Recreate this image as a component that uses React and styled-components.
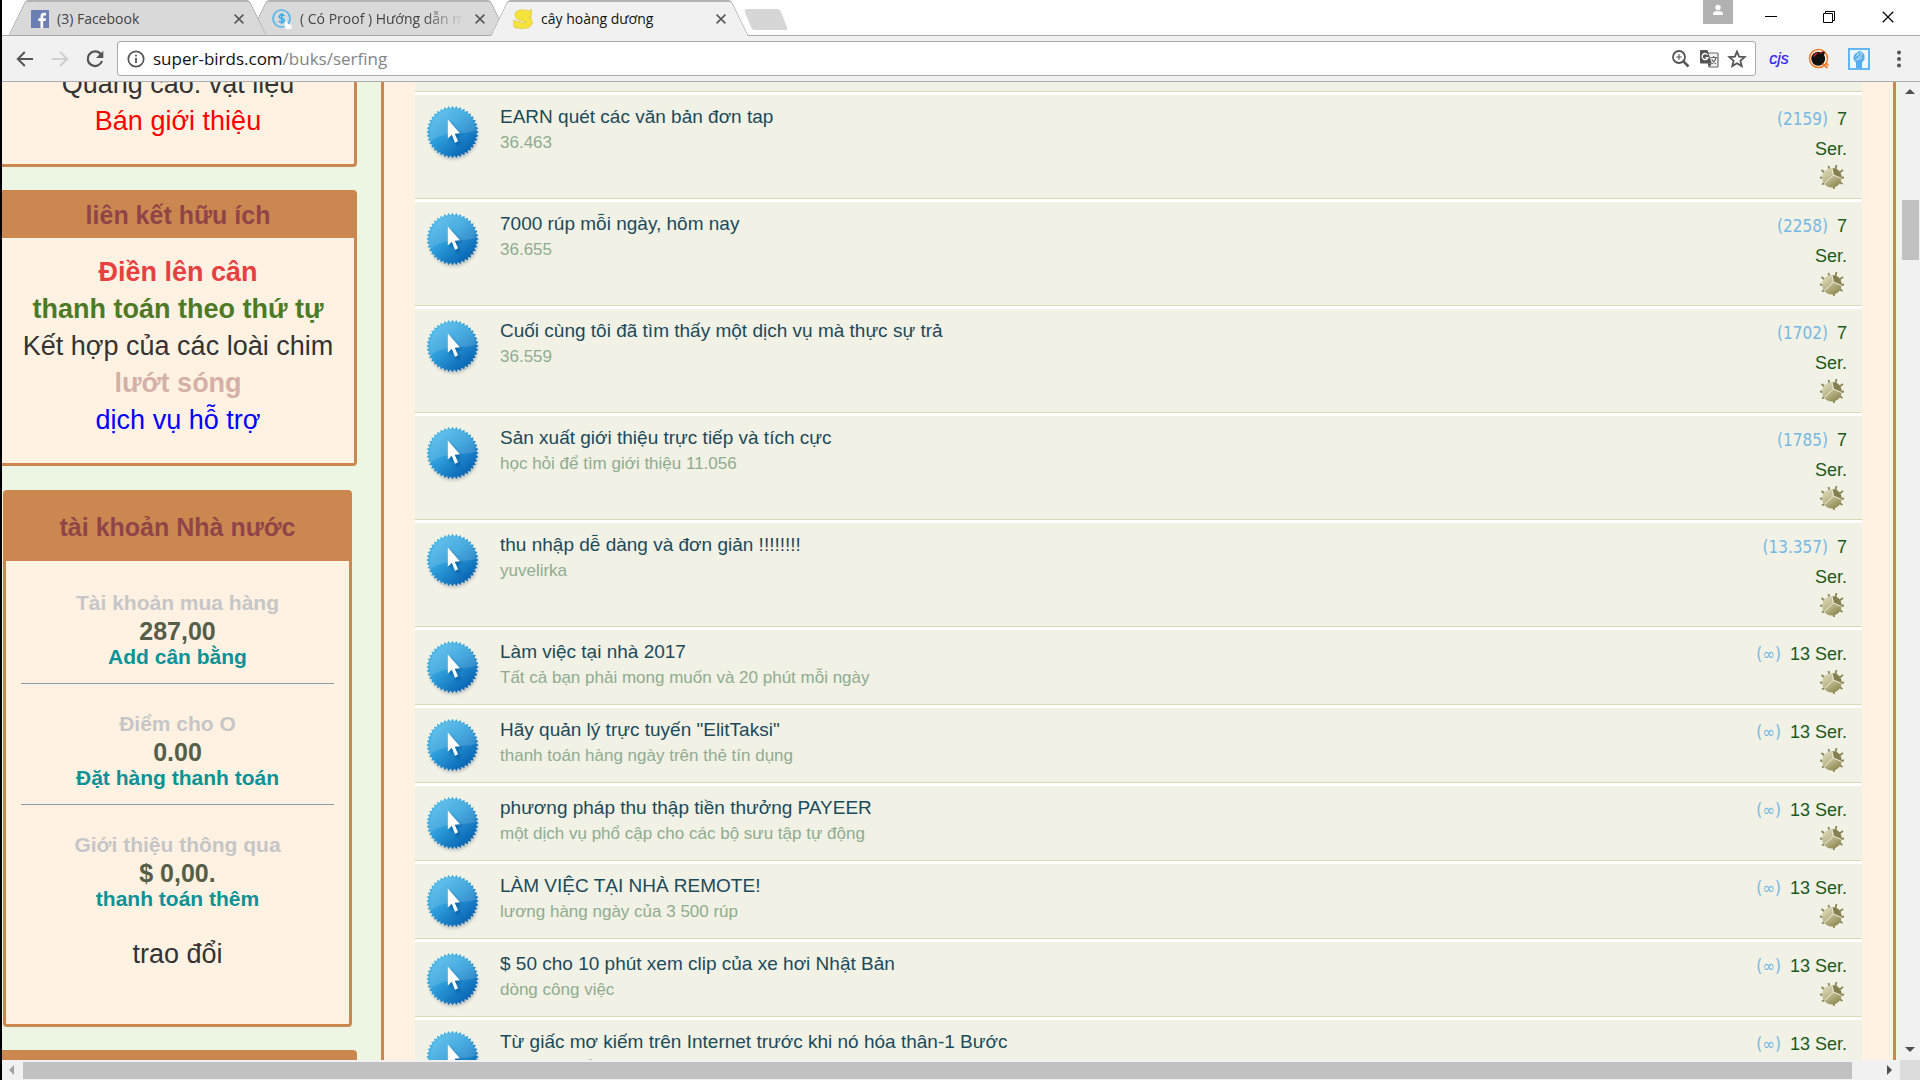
import React from "react";
import styled, { createGlobalStyle, css } from "styled-components";

const GlobalStyle = createGlobalStyle`
  * {
    box-sizing: border-box;
  }
  html, body, #root {
    height: 100%;
  }
  body {
    margin: 0;
    overflow: hidden;
    font-family: "Liberation Sans", Arial, sans-serif;
  }
  button {
    border: 0;
    padding: 0;
    background: none;
    font: inherit;
  }
  a {
    color: inherit;
    text-decoration: none;
  }
`;

const Window = styled.div`
  display: flex;
  flex-direction: column;
  height: 100vh;
  border-left: 2px solid #000;
  background: #fff;
`;

/* ---------- tabs ---------- */

const TabStrip = styled.header`
  display: flex;
  height: 36px;
  padding-left: 15px;
  border-bottom: 1px solid #a9a9a9;
  background: #fff;
`;

const Tab = styled.div`
  position: relative;
  z-index: ${props => (props.$active ? 3 : props.$level)};
  display: flex;
  align-items: center;
  width: 241px;
  height: ${props => (props.$active ? 36 : 35)}px;
  padding: 2px 11px 0 14px;
  font-family: "Open Sans", "Noto Sans", sans-serif;
  font-size: 14px;
  color: ${props => (props.$active ? "#111" : "#444")};

  &::before,
  &::after {
    content: "";
    position: absolute;
    z-index: -1;
    top: 0;
    bottom: 0;
    background: ${props => (props.$active ? "#f1f1f1" : "#d9d9d9")};
    border-top: 2px solid #b3b3b3;
  }
  &::before {
    left: 0;
    right: 24px;
    border-left: 1px solid #a0a0a0;
    border-top-left-radius: 3px;
    transform: skewX(-26deg);
  }
  &::after {
    left: 24px;
    right: 0;
    border-right: 1px solid #a0a0a0;
    border-top-right-radius: 3px;
    transform: skewX(26deg);
  }
`;

const TabTitle = styled.span`
  flex: 1;
  margin-left: 8px;
  overflow: hidden;
  white-space: nowrap;
  line-height: 24px;
  ${props =>
    props.$fade &&
    css`
      -webkit-mask-image: linear-gradient(to right, #000 75%, transparent);
      mask-image: linear-gradient(to right, #000 75%, transparent);
    `}
`;

const CloseTab = styled.button`
  display: flex;
  align-items: center;
  justify-content: center;
  width: 16px;
  height: 16px;
  margin-left: 8px;
`;

const NewTab = styled.button`
  width: 36px;
  height: 21px;
  margin: 9px 0 0 8px;
  border-radius: 3px;
  background: #d6d6d6;
  transform: skewX(22deg);
`;

const WindowControls = styled.div`
  display: flex;
  align-items: flex-start;
  margin-left: auto;
`;

const ProfileButton = styled.button`
  display: flex;
  justify-content: center;
  width: 30px;
  height: 24px;
  padding-top: 4px;
  margin-right: 9px;
  background: #b1b1b1;
`;

const ControlButton = styled.button`
  display: flex;
  align-items: center;
  justify-content: center;
  width: 58px;
  height: 34px;
  &:last-child {
    width: 62px;
    padding-right: 2px;
  }
`;

/* ---------- toolbar ---------- */

const Toolbar = styled.nav`
  display: flex;
  flex-shrink: 0;
  align-items: center;
  height: 46px;
  padding: 0 10px 0 13px;
  border-bottom: 1px solid #adadad;
  background: #f1f1f1;
`;

const NavButton = styled.button`
  display: flex;
  align-items: center;
  justify-content: center;
  width: 20px;
  height: 20px;
  margin-right: 15px;
  &:nth-of-type(3) {
    margin-right: 12px;
  }
`;

const Omnibox = styled.form`
  display: flex;
  flex: 1;
  align-items: center;
  height: 35px;
  padding: 0 8px 0 9px;
  border: 1px solid #a9a9a9;
  border-radius: 3px;
  background: #fff;
`;

const Address = styled.a`
  flex: 1;
  margin-left: 8px;
  font-family: "Open Sans", "Noto Sans", sans-serif;
  font-size: 17px;
  line-height: 28px;
  color: #111;
`;

const AddressPath = styled.span`
  color: #858585;
`;

const OmniButton = styled.button`
  display: flex;
  width: 20px;
  height: 20px;
  margin-left: 8px;
`;

const Extensions = styled.div`
  display: flex;
  align-items: center;
  gap: 18px;
  margin-left: 12px;
`;

const ExtButton = styled.button`
  display: flex;
  align-items: center;
  justify-content: center;
  width: 22px;
  height: 24px;
`;

const CjsLabel = styled.span`
  font-size: 16px;
  font-style: italic;
  line-height: 20px;
  color: #2c22f0;
  -webkit-text-stroke: 0.2px #2c22f0;
`;

/* ---------- page ---------- */

const Viewport = styled.div`
  display: grid;
  flex: 1;
  min-height: 0;
  grid-template-columns: 1fr 20px;
  grid-template-rows: minmax(0, 1fr) 20px;
`;

const Page = styled.div`
  display: flex;
  align-items: flex-start;
  overflow: hidden;
  background: #edf6e3;
`;

const Sidebar = styled.aside`
  display: flex;
  flex-direction: column;
  flex-shrink: 0;
  gap: 23px;
  width: 355px;
  margin-top: -16px;
  text-align: center;
`;

const Card = styled.section`
  border: 3px solid #ca8850;
  border-left-width: 0;
  border-radius: 0 4px 4px 0;
  background: #fff2e2;
  ${props =>
    props.$open &&
    css`
      border-top: 0;
    `}
  ${props =>
    props.$account &&
    css`
      margin: 1px 5px 0 1px;
      border-left-width: 3px;
      border-radius: 4px;
    `}
`;

const CardTitle = styled.h2`
  margin: 0;
  padding: ${props => (props.$tall ? "18px 0" : "6px 0 7px")};
  background: #ca8850;
  color: #914448;
  font-size: 25px;
  line-height: 32px;
`;

const LinkList = styled.div`
  display: flex;
  flex-direction: column;
  padding: ${props => (props.$open ? 0 : 16)}px 0 24px;
`;

const SideLink = styled.a`
  font-size: 27px;
  line-height: 37px;
  font-weight: ${props => (props.$bold ? "bold" : "normal")};
  color: ${props => props.$color || "#333"};
`;

const AccountBody = styled.div`
  padding: 30px 15px 51px;
`;

const Account = styled.div`
  display: flex;
  flex-direction: column;
  font-weight: bold;
  & + & {
    margin-top: 16px;
    padding-top: 28px;
    border-top: 1px solid #8f99a8;
  }
`;

const AccountLabel = styled.span`
  font-size: 21px;
  line-height: 24px;
  color: #c6c6c8;
`;

const AccountValue = styled.span`
  font-size: 25px;
  line-height: 32px;
  color: #555e48;
`;

const AccountLink = styled.a`
  font-size: 21px;
  line-height: 20px;
  color: #0b9296;
`;

const Exchange = styled.div`
  display: flex;
  flex-direction: column;
  margin-top: 27px;
`;

const Main = styled.main`
  flex: 1;
  margin: 0 4px 0 24px;
  padding: 0 31px;
  border: solid #ca8850;
  border-width: 0 3px;
  background: #fff2e2;
`;

const SiteList = styled.ul`
  margin: 0;
  padding: 0;
  list-style: none;
  background: #fff;
`;

const Site = styled.li`
  display: flex;
  align-items: flex-start;
  min-height: 75px;
  margin-bottom: 3px;
  padding: 9px 15px 9px 9px;
  border-bottom: 1px solid #d6dbb6;
  background: #f1f1e5;
`;

const SiteTail = styled.li`
  height: 10px;
  margin-bottom: 3px;
  border-bottom: 1px solid #d6dbb6;
  background: #f1f1e5;
`;

const SiteText = styled.div`
  display: flex;
  flex: 1;
  flex-direction: column;
  margin-left: 16px;
`;

const SiteTitle = styled.a`
  font-size: 19px;
  line-height: 26px;
  color: #1b4a5a;
`;

const SiteNote = styled.span`
  font-size: 17px;
  line-height: 25px;
  color: #8fac90;
`;

const SiteMeta = styled.div`
  display: flex;
  flex-direction: column;
  align-items: flex-end;
  width: 96px;
`;

const Timer = styled.div`
  font-size: 18px;
  line-height: 30px;
  text-align: right;
  color: #1b5a1b;
`;

const Count = styled.span`
  margin-right: 4px;
  font-family: "DejaVu Sans Condensed", "DejaVu Sans", sans-serif;
  font-size: 17px;
  line-height: 20px;
  color: #76b8e4;
`;

const BugButton = styled.button`
  display: flex;
  width: 24px;
  height: 24px;
  margin: 1px 3px 0 0;
`;

/* ---------- scrollbars ---------- */

const ScrollBar = styled.div`
  display: flex;
  flex-direction: ${props => (props.$vertical ? "column" : "row")};
  background: #f1f1f1;
`;

const ScrollArrow = styled.button`
  display: flex;
  align-items: center;
  justify-content: center;
  width: 20px;
  height: 20px;
`;

const ScrollTrack = styled.div`
  flex: 1;
  padding: ${props => (props.$vertical ? "98px 1px 0 2px" : "2px 28px 1px 1px")};
`;

const ScrollThumb = styled.div`
  height: ${props => (props.$vertical ? "60px" : "100%")};
  background: #c1c1c1;
`;

const ScrollCorner = styled.div`
  background: #dcdcdc;
`;

/* ---------- icons ---------- */

const CrossIcon = ({ size = 10, color = "#555", width = 1.5 }) => (
  <svg width={size} height={size} viewBox="0 0 10 10">
    <path d="M.6 .6L9.4 9.4M9.4 .6L.6 9.4" stroke={color} strokeWidth={width} fill="none" />
  </svg>
);

const FacebookIcon = () => (
  <svg width="18" height="18" viewBox="0 0 18 18">
    <rect width="18" height="18" fill="#6b7fb5" />
    <path d="M9.5 18v-7H7.3V8.3h2.2V6.4c0-2.300 1.300-3.600 3.400-3.600 1 0 1.900.1 2.100.1v2.500h-1.400c-1.100 0-1.400.5-1.400 1.300v1.600H15L14.600 11h-2.400v7z" fill="#fff" />
  </svg>
);

const DollarIcon = () => (
  <svg width="20" height="20" viewBox="0 0 20 20">
    <circle cx="9.500" cy="9.500" r="8.500" fill="none" stroke="#4db8ee" strokeWidth="1.700" />
    <path d="M12.300 7C11.700 6.200 10.900 5.900 9.700 5.900c-1.500 0-2.500.7-2.500 1.800 0 2.500 5.200 1.100 5.200 3.700 0 1.200-1.100 1.900-2.700 1.900-1.200 0-2.300-.4-2.900-1.400M9.700 4v11" fill="none" stroke="#3aaeea" strokeWidth="1.600" />
    <path d="M13 12.500l1.500-.5 1.500 3 3.500 1V20h-5.500l-1.500-3z" fill="#fff" />
  </svg>
);

const S_CURVE =
  "M15.500 6.800C14.600 4.600 12.200 3.700 9.600 3.700c-2.800 0-4.700.9-4.700 2.600 0 3.800 11.400 1.400 11.400 6.500 0 2.500-2.700 3.900-6.300 3.900-3 0-5.400-1-6.700-3.300";

const BirdSIcon = () => (
  <svg width="20" height="20" viewBox="0 0 20 20">
    <path d={S_CURVE} fill="none" stroke="#d9be3a" strokeWidth="6.600" />
    <path d="M13.500 3l5-2.500-.5 8-4.500-1zM.5 11l4.500 2-1 6.500-3-1.500z" fill="#f5e23c" stroke="#d9be3a" strokeWidth=".6" />
    <path d={S_CURVE} fill="none" stroke="#f5e23c" strokeWidth="5.600" />
  </svg>
);

const BackIcon = ({ color = "#555", flip }) => (
  <svg width="18" height="16" viewBox="0 0 18 16">
    <path
      d={flip ? "M1 8h15M9.200 1l7 7-7 7" : "M17 8H2M8.800 1l-7 7 7 7"}
      fill="none"
      stroke={color}
      strokeWidth="2"
    />
  </svg>
);

const ReloadIcon = () => (
  <svg width="18" height="18" viewBox="0 0 18 18">
    <path d="M14.800 4.200A7.300 7.300 0 1 0 16 11" fill="none" stroke="#555" strokeWidth="2.200" />
    <path d="M17.300 .8v7.300H10z" fill="#555" />
  </svg>
);

const InfoIcon = () => (
  <svg width="18" height="18" viewBox="0 0 18 18">
    <circle cx="9" cy="9" r="7.700" fill="none" stroke="#555" strokeWidth="1.700" />
    <path d="M9 8v5M9 4.800v1.800" stroke="#555" strokeWidth="1.800" />
  </svg>
);

const ZoomInIcon = () => (
  <svg width="20" height="20" viewBox="0 0 20 20">
    <circle cx="8" cy="8" r="6" fill="none" stroke="#555" strokeWidth="1.800" />
    <path d="M5.200 8h5.600M8 5.200v5.600" stroke="#555" strokeWidth="1.200" />
    <path d="M12.200 12.200l5.300 5.300" stroke="#555" strokeWidth="2.600" />
  </svg>
);

const TranslateIcon = () => (
  <svg width="20" height="20" viewBox="0 0 20 20">
    <path d="M8 4h10q1 0 1 1v12q0 1-1 1h-8z" fill="#f4f4f4" stroke="#666" strokeWidth="1.200" />
    <path d="M2 1h6.500l4.300 13.500H2q-1 0-1-1V2q0-1 1-1z" fill="#555" />
    <path d="M8.600 5.800A3 3 0 1 0 9 8.600H6.400" fill="none" stroke="#fff" strokeWidth="1.400" />
    <path d="M11.500 8.500h6.500M14.700 7v1.500M17 8.500c-.5 2.800-2 4.900-4.200 6.200M12.800 10.200c.8 2 2.200 3.600 4.200 4.800" fill="none" stroke="#666" strokeWidth="1.200" />
    <path d="M9 14.500h3.800L10.600 18z" fill="#555" />
  </svg>
);

const StarIcon = () => (
  <svg width="20" height="20" viewBox="0 0 20 20">
    <path
      d="M10 2.600l2.100 5.100 5.500.4-4.200 3.600 1.300 5.400L10 14.200l-4.700 2.900 1.300-5.400-4.200-3.600 5.500-.4z"
      fill="none"
      stroke="#555"
      strokeWidth="1.800"
    />
  </svg>
);

const BombIcon = () => (
  <svg width="22" height="22" viewBox="0 0 22 22">
    <circle cx="10.500" cy="10.500" r="9" fill="#fff" stroke="#f47a20" strokeWidth="1.500" />
    <circle cx="10.200" cy="10.800" r="7" fill="#111" />
    <path d="M12.500 4.200l3-1 1.500 1.500-1.200 2.800z" fill="#111" />
    <path d="M6 8.500q.8-2.800 3.600-3.500M12 5.500l1.500-1.500" fill="none" stroke="#e21b1b" strokeWidth="1.600" />
    <path d="M14.500 15.500l5 4.500M17.500 14.500l3 3" stroke="#f47a20" strokeWidth="1.700" />
  </svg>
);

const FistIcon = () => (
  <svg width="22" height="22" viewBox="0 0 22 22">
    <rect x="1" y="1" width="20" height="20" fill="#eef8ff" stroke="#62b7f2" strokeWidth="2" />
    <path d="M8 20v-5.500L5.500 11.500V8l2-2.500 2-1.500 2-1 2 .5 1.500 1.500L16.500 7v4.500L14 14.500V20z" fill="#56aeee" />
    <path d="M7.500 8.500l3.500-2.500M10 10l3.500-3M9 4.500l2 2.500M12 4l2 3M7.500 11.500l4.500-.5 2-2" stroke="#eef8ff" strokeWidth=".8" fill="none" />
  </svg>
);

const DotsIcon = () => (
  <svg width="6" height="20" viewBox="0 0 6 20">
    <circle cx="3" cy="3.500" r="2" fill="#555" />
    <circle cx="3" cy="10" r="2" fill="#555" />
    <circle cx="3" cy="16.500" r="2" fill="#555" />
  </svg>
);

const PersonIcon = () => (
  <svg width="12" height="12" viewBox="0 0 12 12">
    <circle cx="6" cy="3.400" r="2.700" fill="#fff" />
    <path d="M1 11V9.500C1 7.800 4 7 6 7s5 .8 5 2.500V11z" fill="#fff" />
  </svg>
);

const MinimizeIcon = () => (
  <svg width="12" height="12" viewBox="0 0 12 12">
    <path d="M0 5.500h12" stroke="#000" />
  </svg>
);

const RestoreIcon = () => (
  <svg width="12" height="12" viewBox="0 0 12 12">
    <path d="M.5 2.500h9v9h-9zM2.500 2.500v-2h9v9h-2" fill="none" stroke="#000" />
  </svg>
);

const TEETH = 40;
const badgePoints = [...Array(TEETH * 2)]
  .map((_, i) => {
    const r = i % 2 ? 23.6 : 26.2;
    const a = (Math.PI * i) / TEETH;
    return `${(28.5 + r * Math.cos(a)).toFixed(2)},${(28 + r * Math.sin(a)).toFixed(2)}`;
  })
  .join(" ");

const BadgeIcon = () => (
  <svg width="60" height="62" viewBox="0 0 60 62">
    <defs>
      <linearGradient id="badgeFill" x1=".15" y1=".1" x2=".8" y2=".9">
        <stop offset="0" stopColor="#50baea" />
        <stop offset=".45" stopColor="#2d9edb" />
        <stop offset="1" stopColor="#0763b2" />
      </linearGradient>
      <filter id="badgeShadow" x="-20%" y="-20%" width="140%" height="140%">
        <feGaussianBlur stdDeviation="1.5" />
      </filter>
    </defs>
    <circle cx="29.500" cy="31" r="24.500" fill="#7d8794" opacity=".4" filter="url(#badgeShadow)" />
    <polygon points={badgePoints} fill="url(#badgeFill)" />
    <path d="M6 38C3 18 15 4.500 28.500 4.500c13 0 23 10 23.500 22-10 5-31-1-46 11.500z" fill="#fff" opacity=".13" />
    <path d="M26 18l12 14-5 .5 3.500 8-3.500 1.500-3.500-8-3.500 3.500z" fill="#064a8c" opacity=".55" filter="url(#badgeShadow)" />
    <path d="M23.800 15.500L35.900 29.300l-5.200.4 3.400 7.600-3.100 1.400-3.200-7.900-4 3.700z" fill="#fff" />
  </svg>
);

const BugIcon = () => (
  <svg width="24" height="24" viewBox="0 0 24 24">
    <defs>
      <linearGradient id="bugFill" x1=".1" y1=".1" x2=".7" y2="1">
        <stop offset="0" stopColor="#dad7b8" />
        <stop offset=".5" stopColor="#bcb88c" />
        <stop offset="1" stopColor="#8d8750" />
      </linearGradient>
    </defs>
    <path
      d="M9.500 5L8.500 1M15.500 4l1-4M5 8L1.500 5M3 13l-3-.5M19.500 7.500l3.500-2.500M20 13l4-.5M19.500 17l3 2M13.500 20l.5 4M4.500 18L2 19.500"
      stroke="#8a8558"
      strokeWidth="1.800"
      fill="none"
    />
    <circle cx="11.800" cy="12.800" r="9.800" fill="url(#bugFill)" />
    <path d="M12.500 3.200q4.500-.5 7.200 3.300 2 3 1.700 6.500l-7.400-3.200z" fill="#858050" />
    <path d="M13.300 10L4.500 18.500M12 3.500l1.300 6.500 8 3.500" stroke="#eceada" strokeWidth="1" fill="none" />
  </svg>
);

const ARROWS = {
  up: "M5 2l5 5H0z",
  down: "M5 7l5-5H0z",
  left: "M2 5l5-5v10z",
  right: "M7 5L2 0v10z"
};

const ArrowIcon = ({ dir, color = "#505050" }) => (
  <svg width="10" height="10" viewBox="0 0 10 10">
    <path d={ARROWS[dir]} fill={color} />
  </svg>
);

/* the drawing carries its own shadow, so it hangs over the 52px disc a little */
const BadgeLink = styled.a`
  display: block;
  height: 62px;
  width: 60px;
  margin-bottom: -9px;
`;

/* ---------- data ---------- */

const usefulLinks = [
  { text: "Điền lên cân", color: "#e84040", bold: true },
  { text: "thanh toán theo thứ tự", color: "#4c7a26", bold: true },
  { text: "Kết hợp của các loài chim" },
  { text: "lướt sóng", color: "#d4b0a8", bold: true },
  { text: "dịch vụ hỗ trợ", color: "#0000ff" }
];

const accounts = [
  { label: "Tài khoản mua hàng", value: "287,00", link: "Add cân bằng" },
  { label: "Điểm cho O", value: "0.00", link: "Đặt hàng thanh toán" },
  { label: "Giới thiệu thông qua", value: "$ 0,00.", link: "thanh toán thêm" }
];

const sites = [
  { title: "EARN quét các văn bản đơn tap", note: "36.463", count: "2159", time: 7 },
  { title: "7000 rúp mỗi ngày, hôm nay", note: "36.655", count: "2258", time: 7 },
  { title: "Cuối cùng tôi đã tìm thấy một dịch vụ mà thực sự trả", note: "36.559", count: "1702", time: 7 },
  { title: "Sản xuất giới thiệu trực tiếp và tích cực", note: "học hỏi để tìm giới thiệu 11.056", count: "1785", time: 7 },
  { title: "thu nhập dễ dàng và đơn giản !!!!!!!!", note: "yuvelirka", count: "13.357", time: 7 },
  { title: "Làm việc tại nhà 2017", note: "Tất cả bạn phải mong muốn và 20 phút mỗi ngày", count: "∞", time: 13 },
  { title: "Hãy quản lý trực tuyến \"ElitTaksi\"", note: "thanh toán hàng ngày trên thẻ tín dụng", count: "∞", time: 13 },
  { title: "phương pháp thu thập tiền thưởng PAYEER", note: "một dịch vụ phổ cập cho các bộ sưu tập tự động", count: "∞", time: 13 },
  { title: "LÀM VIỆC TẠI NHÀ REMOTE!", note: "lương hàng ngày của 3 500 rúp", count: "∞", time: 13 },
  { title: "$ 50 cho 10 phút xem clip của xe hơi Nhật Bản", note: "dòng công việc", count: "∞", time: 13 },
  { title: "Từ giấc mơ kiếm trên Internet trước khi nó hóa thân-1 Bước", note: "một cách để kiếm tiền trong cuốn sách", count: "∞", time: 13 }
];

const BrowserTab = ({ icon, title, active, level, fade }) => (
  <Tab $active={active} $level={level}>
    {icon}
    <TabTitle $fade={fade}>{title}</TabTitle>
    <CloseTab aria-label="Close tab">
      <CrossIcon />
    </CloseTab>
  </Tab>
);

const SiteRow = ({ site }) => (
  <Site>
    <BadgeLink href="#" aria-label={site.title}>
      <BadgeIcon />
    </BadgeLink>
    <SiteText>
      <SiteTitle href="#">{site.title}</SiteTitle>
      <SiteNote>{site.note}</SiteNote>
    </SiteText>
    <SiteMeta>
      <Timer>
        <Count>({site.count})</Count> {site.time} Ser.
      </Timer>
      <BugButton aria-label="Report">
        <BugIcon />
      </BugButton>
    </SiteMeta>
  </Site>
);

const App = () => (
  <Window>
    <GlobalStyle />
    <TabStrip>
      <BrowserTab icon={<FacebookIcon />} title="(3) Facebook" level={2} />
      <BrowserTab icon={<DollarIcon />} title="( Có Proof ) Hướng dẫn mới" level={1} fade />
      <BrowserTab icon={<BirdSIcon />} title="cây hoàng dương" active />
      <NewTab aria-label="New tab" />
      <WindowControls>
        <ProfileButton aria-label="Profile"><PersonIcon /></ProfileButton>
        <ControlButton aria-label="Minimize"><MinimizeIcon /></ControlButton>
        <ControlButton aria-label="Restore"><RestoreIcon /></ControlButton>
        <ControlButton aria-label="Close"><CrossIcon size={12} color="#000" width={1} /></ControlButton>
      </WindowControls>
    </TabStrip>

    <Toolbar>
      <NavButton aria-label="Back"><BackIcon /></NavButton>
      <NavButton aria-label="Forward"><BackIcon flip color="#cfcfcf" /></NavButton>
      <NavButton aria-label="Reload"><ReloadIcon /></NavButton>
      <Omnibox onSubmit={e => e.preventDefault()}>
        <InfoIcon />
        <Address href="#">
          super-birds.com<AddressPath>/buks/serfing</AddressPath>
        </Address>
        <OmniButton type="button" aria-label="Zoom"><ZoomInIcon /></OmniButton>
        <OmniButton type="button" aria-label="Translate"><TranslateIcon /></OmniButton>
        <OmniButton type="button" aria-label="Bookmark"><StarIcon /></OmniButton>
      </Omnibox>
      <Extensions>
        <ExtButton><CjsLabel>cjs</CjsLabel></ExtButton>
        <ExtButton aria-label="Bomb"><BombIcon /></ExtButton>
        <ExtButton aria-label="Fist"><FistIcon /></ExtButton>
        <ExtButton aria-label="Menu"><DotsIcon /></ExtButton>
      </Extensions>
    </Toolbar>

    <Viewport>
      <Page>
        <Sidebar>
          <Card $open>
            <LinkList $open>
              <SideLink href="#">Quảng cáo: vật liệu</SideLink>
              <SideLink href="#" $color="#ff0000">Bán giới thiệu</SideLink>
            </LinkList>
          </Card>
          <Card>
            <CardTitle>liên kết hữu ích</CardTitle>
            <LinkList>
              {usefulLinks.map(link => (
                <SideLink href="#" key={link.text} $color={link.color} $bold={link.bold}>
                  {link.text}
                </SideLink>
              ))}
            </LinkList>
          </Card>
          <Card $account>
            <CardTitle $tall>tài khoản Nhà nước</CardTitle>
            <AccountBody>
              {accounts.map(account => (
                <Account key={account.label}>
                  <AccountLabel>{account.label}</AccountLabel>
                  <AccountValue>{account.value}</AccountValue>
                  <AccountLink href="#">{account.link}</AccountLink>
                </Account>
              ))}
              <Exchange>
                <SideLink href="#">trao đổi</SideLink>
              </Exchange>
            </AccountBody>
          </Card>
          <Card>
            <CardTitle>&nbsp;</CardTitle>
          </Card>
        </Sidebar>

        <Main>
          <SiteList>
            <SiteTail />
            {sites.map(site => (
              <SiteRow site={site} key={site.title} />
            ))}
          </SiteList>
        </Main>
      </Page>

      <ScrollBar $vertical>
        <ScrollArrow aria-label="Scroll up"><ArrowIcon dir="up" /></ScrollArrow>
        <ScrollTrack $vertical>
          <ScrollThumb $vertical />
        </ScrollTrack>
        <ScrollArrow aria-label="Scroll down"><ArrowIcon dir="down" /></ScrollArrow>
      </ScrollBar>
      <ScrollBar>
        <ScrollArrow aria-label="Scroll left"><ArrowIcon dir="left" color="#a3a3a3" /></ScrollArrow>
        <ScrollTrack>
          <ScrollThumb />
        </ScrollTrack>
        <ScrollArrow aria-label="Scroll right"><ArrowIcon dir="right" /></ScrollArrow>
      </ScrollBar>
      <ScrollCorner />
    </Viewport>
  </Window>
);

export default App;
